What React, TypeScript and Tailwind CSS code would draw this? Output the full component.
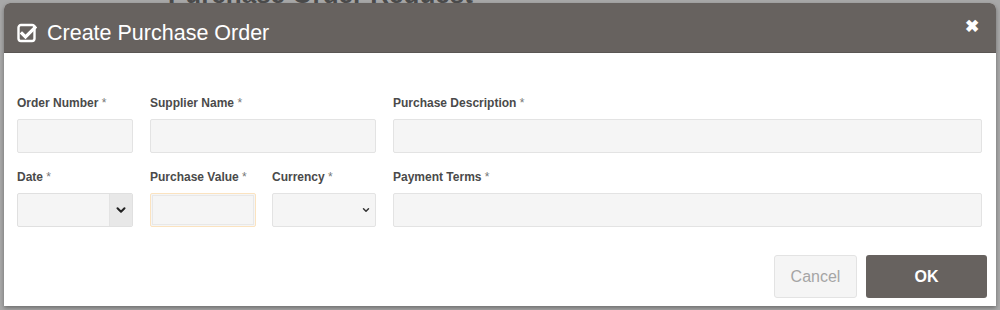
import { ChevronDown } from 'lucide-react';

const Label = ({ text }: { text: string }) => (
  <label className="block h-[16px] text-[12px] font-bold leading-[16px] text-[#4a4a4a]">
    {text} <span className="font-normal text-[#777]">*</span>
  </label>
);

const Box = ({ className = '' }: { className?: string }) => (
  <div className={`h-[34px] rounded-[2px] border border-[#e3e3e3] bg-[#f5f5f5] ${className}`} />
);

function CheckSquare() {
  return (
    <svg width="20" height="20" viewBox="0 0 20 20" className="shrink-0">
      <rect x="1.5" y="2" width="16" height="16" rx="2.5" fill="none" stroke="#fff" strokeWidth="2.4" />
      <path d="M5 10.5 L8.5 14 L18 4.5" fill="none" stroke="#fff" strokeWidth="3.2" strokeLinecap="square" />
    </svg>
  );
}

export default function App() {
  return (
    <div className="h-[310px] w-[1000px] overflow-hidden bg-[#a8a8a8] font-['Liberation_Sans',Arial,sans-serif]">
      {/* page behind the overlay, only its bottom edge peeks out */}
      <div className="relative h-[3px] overflow-hidden">
        <div className="absolute left-[168px] top-[-21px] whitespace-nowrap text-[26px] font-bold leading-[30px] text-[#4a4a4a]">
          Purchase Order Request
        </div>
      </div>

      <div className="ml-[4px] w-[992px] rounded-t-[6px] bg-white shadow-[0_2px_4px_rgba(0,0,0,0.35)]">
        {/* Header */}
        <div className="flex h-[50px] rounded-t-[6px] border-b border-[#5a5654] bg-[#67625f] pl-[13px] pr-[17px]">
          <div className="mt-[19px] flex flex-1 items-center self-start">
            <CheckSquare />
            <h2 className="ml-[10px] text-[21.5px] leading-[22px] text-white">Create Purchase Order</h2>
          </div>
          <span className="mt-[15px] self-start text-[17px] font-bold leading-none text-white">✖</span>
        </div>

        {/* Body */}
        <div className="px-[13px] pt-[42px]">
          <div className="flex gap-[17px]">
            <div className="w-[116px]">
              <Label text="Order Number" />
              <Box className="mt-[8px]" />
            </div>
            <div className="w-[226px]">
              <Label text="Supplier Name" />
              <Box className="mt-[8px]" />
            </div>
            <div className="w-[589px]">
              <Label text="Purchase Description" />
              <Box className="mt-[8px]" />
            </div>
          </div>

          <div className="mt-[16px] flex gap-[17px]">
            <div className="w-[116px]">
              <Label text="Date" />
              <div className="mt-[8px] flex h-[34px] overflow-hidden rounded-[2px] border border-[#e0e0e0] bg-[#f5f5f5]">
                <div className="flex-1" />
                <div className="flex w-[23px] items-center justify-center border-l border-[#e3e3e3] bg-[#e8e8e8]">
                  <ChevronDown size={14} strokeWidth={3.5} color="#222" />
                </div>
              </div>
            </div>
            <div className="flex w-[226px] gap-[16px]">
              <div className="w-[106px]">
                <Label text="Purchase Value" />
                <div className="mt-[8px] h-[34px] rounded-[2px] border border-[#fbe3c0] bg-[#f5f5f5] p-[1px]">
                  <div className="h-full border border-[#e8e8e8]" />
                </div>
              </div>
              <div className="w-[104px]">
                <Label text="Currency" />
                <div className="mt-[8px] flex h-[34px] items-center justify-end rounded-[2px] border border-[#e3e3e3] bg-[#f5f5f5] pr-[4px]">
                  <ChevronDown size={10} strokeWidth={3.5} color="#333" />
                </div>
              </div>
            </div>
            <div className="w-[589px]">
              <Label text="Payment Terms" />
              <Box className="mt-[8px]" />
            </div>
          </div>
        </div>

        {/* Footer */}
        <div className="flex justify-end gap-[9px] pb-[8px] pr-[9px] pt-[28px]">
          <button className="h-[43px] w-[83px] rounded-[3px] border border-[#e3e3e3] bg-[#f5f5f5] text-[16px] text-[#a5a5a5]">
            Cancel
          </button>
          <button className="h-[43px] w-[121px] rounded-[3px] bg-[#67625f] text-[16px] font-bold text-white">
            OK
          </button>
        </div>
      </div>
    </div>
  );
}
